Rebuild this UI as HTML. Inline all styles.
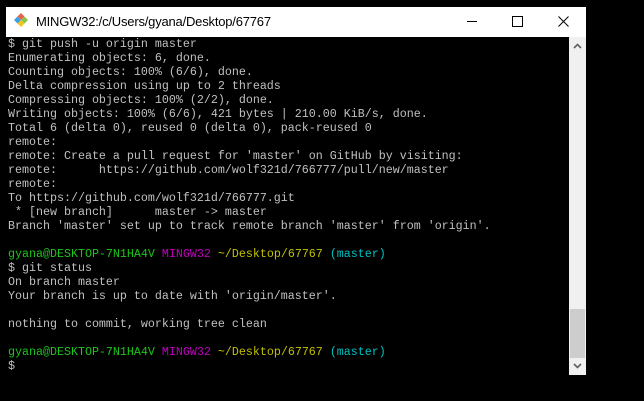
<!DOCTYPE html>
<html><head><style>
html,body{margin:0;padding:0;background:#000;width:644px;height:401px;overflow:hidden}
.win{position:absolute;left:6px;top:7px;width:580px;height:369px;background:#000}
.tb{position:absolute;left:0;top:0;width:580px;height:30px;background:#fff}
.title{position:absolute;left:30px;top:7px;font:13px "Liberation Sans",sans-serif;color:#000;letter-spacing:-0.2px}
.term{position:absolute;left:2px;top:30px;font:11.67px/14px "Liberation Mono",monospace;color:#c0c0c0;white-space:pre}
.g{color:#1cc41c}.m{color:#c000c0}.y{color:#c0c000}.c{color:#00c0c0}
.sb{position:absolute;left:563px;top:30px;width:17px;height:338px;background:#f0f0f0}
.thumb{position:absolute;left:1px;top:272px;width:15px;height:49px;background:#cdcdcd}
</style></head><body>
<div class="win">
 <div class="tb">
  <svg style="position:absolute;left:8px;top:6px" width="14" height="14" viewBox="0 0 14 14">
   <polygon points="7,0 10.5,3.5 7,7 3.5,3.5" fill="#e8604c"/>
   <polygon points="10.5,3.5 14,7 10.5,10.5 7,7" fill="#8bc34a"/>
   <polygon points="7,7 10.5,10.5 7,14 3.5,10.5" fill="#f5c518"/>
   <polygon points="3.5,3.5 7,7 3.5,10.5 0,7" fill="#3aa0e8"/>
  </svg>
  <div class="title">MINGW32:/c/Users/gyana/Desktop/67767</div>
  <div style="position:absolute;left:461px;top:14px;width:10px;height:1px;background:#000"></div>
  <div style="position:absolute;left:506px;top:9px;width:9px;height:9px;border:1px solid #000"></div>
  <svg style="position:absolute;left:552px;top:9px" width="11" height="11" viewBox="0 0 11 11"><path d="M0.5 0.5L10.5 10.5M10.5 0.5L0.5 10.5" stroke="#000" stroke-width="1"/></svg>
 </div>
 <div class="term">$ git push -u origin master
Enumerating objects: 6, done.
Counting objects: 100% (6/6), done.
Delta compression using up to 2 threads
Compressing objects: 100% (2/2), done.
Writing objects: 100% (6/6), 421 bytes | 210.00 KiB/s, done.
Total 6 (delta 0), reused 0 (delta 0), pack-reused 0
remote:
remote: Create a pull request for 'master' on GitHub by visiting:
remote:      https://github.com/wolf321d/766777/pull/new/master
remote:
To https://github.com/wolf321d/766777.git
 * [new branch]      master -&gt; master
Branch 'master' set up to track remote branch 'master' from 'origin'.

<span class="g">gyana@DESKTOP-7N1HA4V</span> <span class="m">MINGW32</span> <span class="y">~/Desktop/67767</span> <span class="c">(master)</span>
$ git status
On branch master
Your branch is up to date with 'origin/master'.

nothing to commit, working tree clean

<span class="g">gyana@DESKTOP-7N1HA4V</span> <span class="m">MINGW32</span> <span class="y">~/Desktop/67767</span> <span class="c">(master)</span>
$</div>
 <div class="sb">
  <svg style="position:absolute;left:4px;top:6px" width="9" height="6" viewBox="0 0 9 6"><path d="M1 5L4.5 1.5L8 5" stroke="#606060" stroke-width="1.6" fill="none"/></svg>
  <div class="thumb"></div>
  <svg style="position:absolute;left:4px;top:326px" width="9" height="6" viewBox="0 0 9 6"><path d="M1 1L4.5 4.5L8 1" stroke="#606060" stroke-width="1.6" fill="none"/></svg>
 </div>
</div>
</body></html>
